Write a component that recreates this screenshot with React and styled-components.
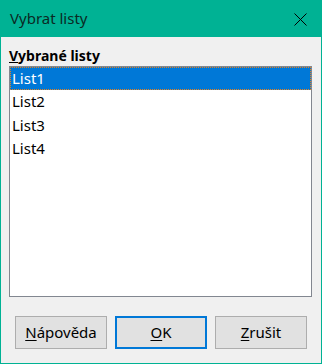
import React from "react";
import styled, { createGlobalStyle } from "styled-components";

const Global = createGlobalStyle`
  html, body {
    margin: 0;
    padding: 0;
    background: #f0f0f0;
  }
  * {
    box-sizing: border-box;
  }
`;

const sheets = ["List1", "List2", "List3", "List4"];

const App = () => {
  return (
    <>
      <Global />
      <Dialog>
        <TitleBar>
          <Title>Vybrat listy</Title>
          <CloseButton>
            <svg width="13" height="13" viewBox="0 0 13 13">
              <path d="M0.5 0.5 L12.5 12.5 M12.5 0.5 L0.5 12.5" stroke="#000" strokeWidth="1" />
            </svg>
          </CloseButton>
        </TitleBar>
        <Body>
          <Label>
            <u>V</u>ybrané listy
          </Label>
          <ListBox>
            {sheets.map((name, i) => (
              <Row key={name} selected={i === 0}>
                {name}
              </Row>
            ))}
          </ListBox>
          <Buttons>
            <Button>
              <u>N</u>ápověda
            </Button>
            <Button primary>
              <u>O</u>K
            </Button>
            <Button>
              <u>Z</u>rušit
            </Button>
          </Buttons>
        </Body>
      </Dialog>
    </>
  );
};

export default App;

const Dialog = styled.div`
  display: flex;
  flex-direction: column;
  width: 322px;
  height: 364px;
  background: #f0f0f0;
  border: 1px solid #00b294;
  border-top: none;
  font-family: "Noto Sans", "Open Sans", sans-serif;
  color: #000;
`;

const TitleBar = styled.div`
  display: flex;
  align-items: center;
  justify-content: space-between;
  height: 37px;
  margin: 0 -1px;
  padding: 0 15px 0 10px;
  background: #00b294;
`;

const Title = styled.div`
  font-size: 15px;
  color: #0b2a24;
  padding-bottom: 1px;
`;

const CloseButton = styled.div`
  display: flex;
  width: 13px;
  height: 13px;
  margin-top: 1px;
`;

const Body = styled.div`
  flex: 1;
  display: flex;
  flex-direction: column;
  padding: 9px 8px 0 8px;
`;

const Label = styled.div`
  font-size: 14px;
  font-weight: 700;
  line-height: 19px;
  height: 20px;

  u {
    text-decoration-thickness: 1px;
  }
`;

const ListBox = styled.div`
  height: 231px;
  margin-right: 1px;
  background: #fff;
  border: 1px solid #828790;
  display: flex;
  flex-direction: column;
`;

const Row = styled.div`
  height: 23.33px;
  display: flex;
  align-items: center;
  padding: 0 0 1px 2px;
  font-size: 15px;
  background: ${(p) => (p.selected ? "#0078d7" : "transparent")};
  color: ${(p) => (p.selected ? "#fff" : "#000")};
  outline: ${(p) => (p.selected ? "1px dotted #e8821e" : "none")};
  outline-offset: -1px;
`;

const Buttons = styled.div`
  display: flex;
  gap: 8px;
  padding: 19px 0 0 6px;
`;

const Button = styled.div`
  width: 92px;
  height: 33px;
  display: flex;
  align-items: center;
  justify-content: center;
  font-size: 15px;
  background: #e1e1e1;
  border: ${(p) => (p.primary ? "2px solid #0078d7" : "1px solid #adadad")};
  padding-bottom: 1px;

  u {
    text-decoration-thickness: 1px;
    text-underline-offset: 2px;
  }
`;
